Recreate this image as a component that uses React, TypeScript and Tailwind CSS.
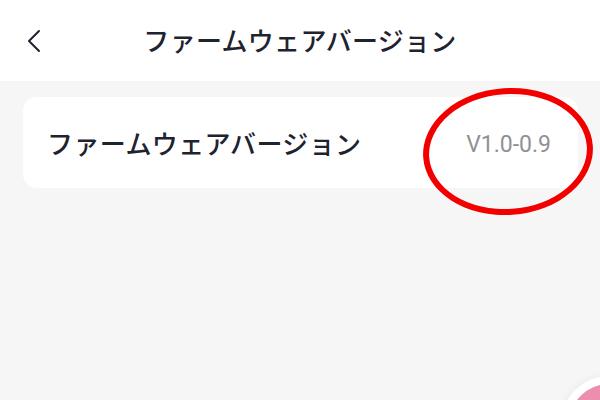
import React from "react";

const jp = { fontFamily: '"Noto Sans CJK JP", "Noto Sans", sans-serif' };

function BackIcon() {
  return (
    <svg width="14" height="24" viewBox="0 0 14 24" fill="none">
      <path d="M12 2 L2 12 L12 22" stroke="#1f2330" strokeWidth="2" strokeLinecap="round" strokeLinejoin="round" />
    </svg>
  );
}

export default function App() {
  return (
    <div className="relative w-[600px] h-[400px] overflow-hidden bg-[#f6f6f6]" style={jp}>
      <header className="relative h-[81px] bg-white flex items-center justify-center">
        <button className="absolute left-[27px] top-[29px]">
          <BackIcon />
        </button>
        <h1 className="text-[26px] font-medium text-[#1f2330] tracking-[0.3px] mt-[-2px]">
          ファームウェアバージョン
        </h1>
      </header>

      <main className="pl-[23px] pr-[22px] pt-[16px]">
        <div className="h-[91px] rounded-[14px] bg-white flex items-center justify-between pl-[24px] pr-[27px]">
          <span className="text-[26px] font-medium text-[#1f2330] tracking-[0.4px]">ファームウェアバージョン</span>
          <span
            className="text-[23px] text-[#8f9196] mt-[5px]"
            style={{ fontFamily: 'Roboto, "Noto Sans", sans-serif' }}
          >
            V1.0-0.9
          </span>
        </div>
      </main>

      {/* red highlight ring around the version */}
      <div className="absolute left-[423px] top-[88px] w-[170px] h-[127px] rounded-[50%] border-[6px] border-[#f20000] rotate-[-4deg]" />

      {/* floating action button peeking in at the corner */}
      <div className="absolute left-[561px] top-[376px] w-[96px] h-[96px] rounded-full bg-white shadow-[0_0_8px_rgba(0,0,0,0.06)] flex items-center justify-center">
        <div className="w-[80px] h-[80px] rounded-full bg-[#ec8fae]" />
      </div>
    </div>
  );
}
